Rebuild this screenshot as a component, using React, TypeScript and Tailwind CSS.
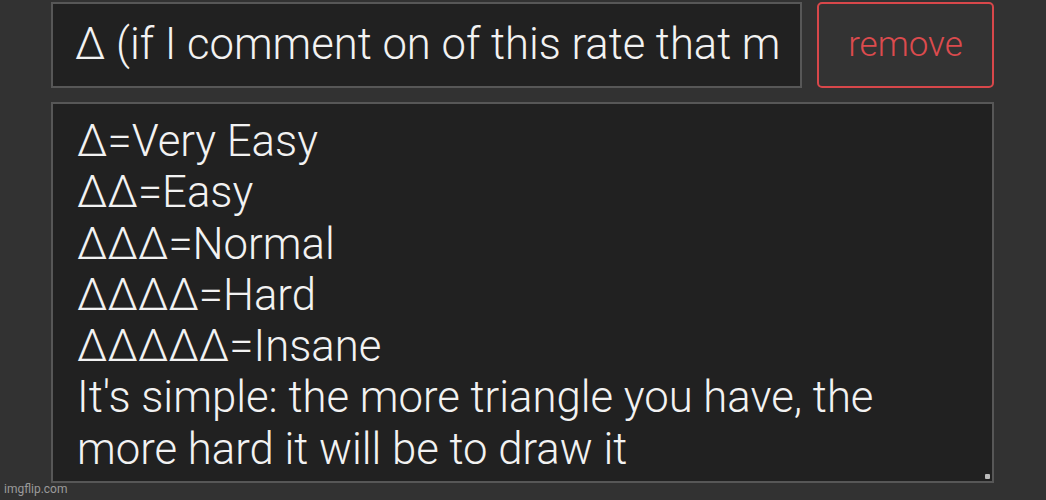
import React from "react";

export default function App() {
  const lines = [
    "Δ=Very Easy",
    "ΔΔ=Easy",
    "ΔΔΔ=Normal",
    "ΔΔΔΔ=Hard",
    "ΔΔΔΔΔ=Insane",
    "It's simple: the more triangle you have, the",
    "more hard it will be to draw it",
  ];
  return (
    <div
      className="relative w-[1046px] h-[500px] bg-[#323232] overflow-hidden"
      style={{ fontFamily: "Roboto, 'Noto Sans', sans-serif" }}
    >
      <div className="flex flex-col gap-[14px] pl-[51px] pt-[2px] w-[994px]">
        <div className="flex gap-[15px] h-[86px]">
          <div className="flex-1 flex items-center bg-[#212121] border-2 border-[#575757] overflow-hidden pl-[22px] pr-[10px]">
            <span className="text-[43.6px] font-light leading-none text-[#f2f2f2] whitespace-nowrap">
              Δ (if I comment on of this rate that m
            </span>
          </div>
          <div className="w-[177px] flex items-center justify-center border-2 border-[#d8474a] rounded-[5px] bg-[#333333]">
            <span className="text-[35px] font-light leading-none text-[#dc4b4e] -mt-[2px]">remove</span>
          </div>
        </div>
        <div className="relative h-[381px] bg-[#212121] border-2 border-[#575757] pl-[24px] pt-[12px]">
          {lines.map((l, i) => (
            <div key={i} className="text-[43.7px] font-light leading-[51.3px] text-[#f2f2f2] whitespace-nowrap">
              {l}
            </div>
          ))}
          <div className="absolute right-[2px] bottom-[2px] w-[5px] h-[5px] bg-[#bbbbbb] rounded-[1px]" />
        </div>
      </div>
      <div className="absolute left-[4px] bottom-[2px] text-[12px] text-[#9a9a9a]">imgflip.com</div>
    </div>
  );
}
